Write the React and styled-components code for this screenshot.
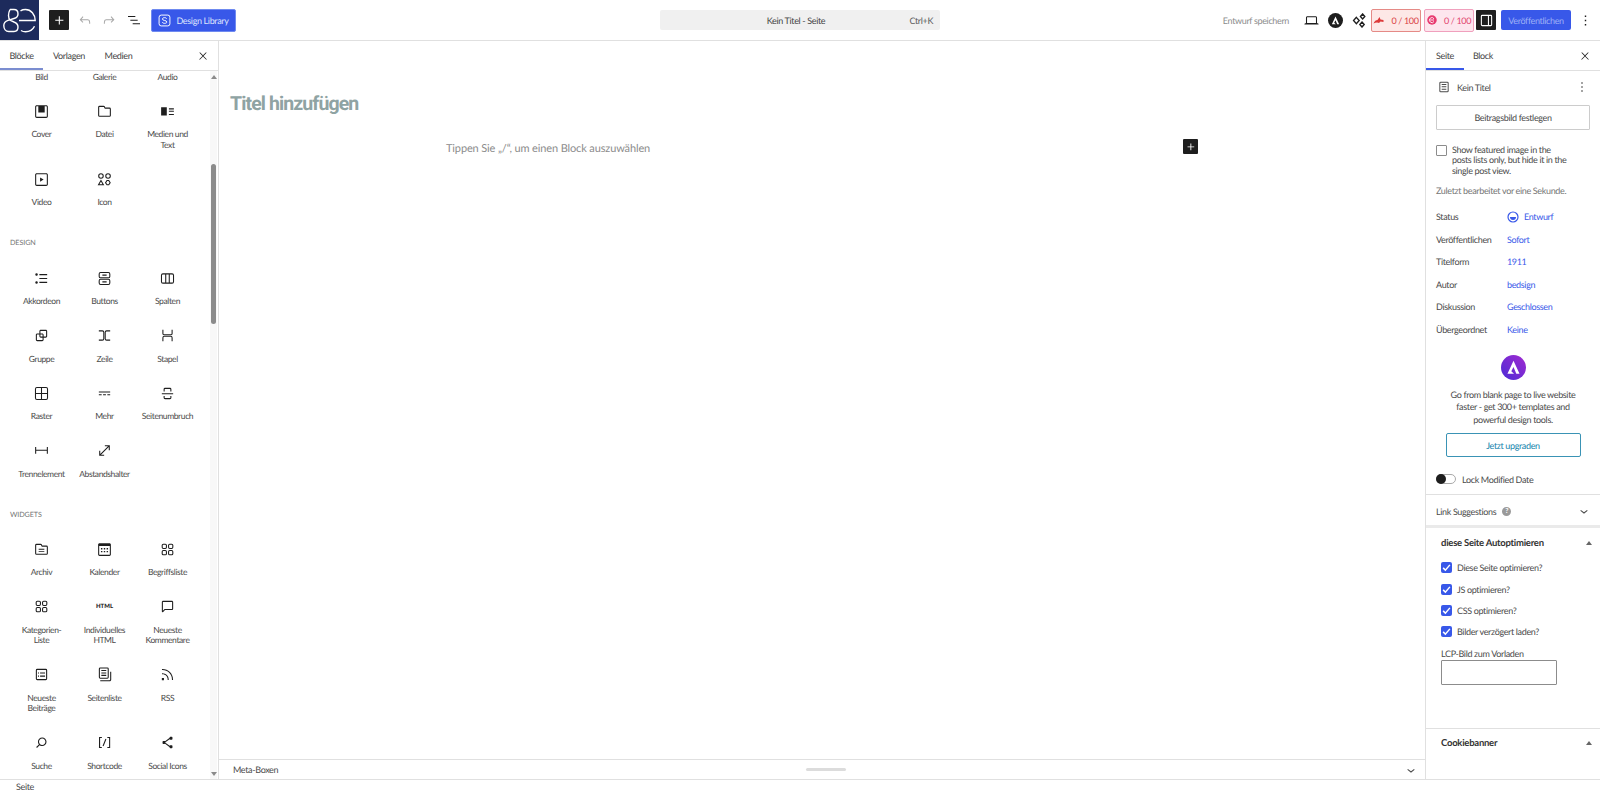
import React from "react";
import styled, { createGlobalStyle } from "styled-components";

const GlobalStyle = createGlobalStyle`
  html, body {
    margin: 0;
    padding: 0;
    height: 100%;
    background: #fff;
    overflow: hidden;
    font-family: "Lato", "Noto Sans", sans-serif;
    font-size: 9px;
    letter-spacing: -0.35px;
    color: #4a4a4a;
    text-rendering: geometricPrecision;
  }
  * { box-sizing: border-box; }
`;

const paths = {
  plus: "M11 12.5V17.5H12.5V12.5H17.5V11H12.5V6H11V11H6V12.5H11Z",
  undo: "M18.3 11.7c-.6-.6-1.4-.9-2.3-.9H6.7l2.9-3.3-1.1-1-4.5 5L8.5 16l1-1-2.7-2.7H16c.5 0 .9.2 1.3.5 1 1 1 3.4 1 4.5v.3h1.5v-.2c0-1.5 0-4.3-1.5-5.7z",
  redo: "M15.6 6.5l-1.1 1 2.9 3.3H8c-.9 0-1.7.3-2.3.9-1.4 1.5-1.4 4.2-1.4 5.6v.2h1.5v-.3c0-1.1 0-3.5 1-4.5.3-.3.7-.5 1.3-.5h9.2L14.5 15l1.1 1.1 4.6-4.6-4.6-5z",
  listView: "M3 6h11v1.5H3V6Zm3.5 5.5h11V13h-11v-1.5ZM21 17H10v1.5h11V17Z",
  close: "M13 11.8l6.1-6.3-1-1-6.1 6.2-6.1-6.2-1 1 6.1 6.3-6.5 6.7 1 1 6.5-6.6 6.5 6.6 1-1z",
  dots: "M13 19h-2v-2h2v2zm0-6h-2v-2h2v2zm0-6h-2V5h2v2z",
  laptop: "M20.5 16h-.7V8c0-1.1-.9-2-2-2H6.2c-1.1 0-2 .9-2 2v8h-.7c-.8 0-1.5.7-1.5 1.5h20c0-.8-.7-1.5-1.5-1.5zM5.7 8c0-.3.2-.5.5-.5h11.6c.3 0 .5.2.5.5v7.6H5.7V8z",
  sidebar: "M18 4H6a2 2 0 0 0-2 2v12a2 2 0 0 0 2 2h12a2 2 0 0 0 2-2V6a2 2 0 0 0-2-2ZM5.5 18V6a.5.5 0 0 1 .5-.5h8v13H6a.5.5 0 0 1-.5-.5Zm13 0a.5.5 0 0 1-.5.5h-2.500v-13H18a.5.5 0 0 1 .5.5v12Z",
  chevronDown: "M17.5 11.6L12 16l-5.5-4.4.9-1.2L12 14l4.5-3.6 1 1.2z",
  page: "M15.5 7.5h-7V9h7V7.5Zm-7 3.5h7v1.5h-7V11Zm7 3.5h-7V16h7v-1.5ZM17 4H7a2 2 0 0 0-2 2v12a2 2 0 0 0 2 2h10a2 2 0 0 0 2-2V6a2 2 0 0 0-2-2ZM7 5.5h10a.5.5 0 0 1 .5.5v12a.5.5 0 0 1-.5.5H7a.5.5 0 0 1-.5-.5V6a.5.5 0 0 1 .5-.5Z",
  cover: "M18.7 3H5.3C4 3 3 4 3 5.3v13.4C3 20 4 21 5.3 21h13.4c1.3 0 2.3-1 2.3-2.3V5.3C21 4 20 3 18.7 3zm.8 15.7c0 .4-.4.8-.8.8H5.3c-.4 0-.8-.4-.8-.8V5.3c0-.4.4-.8.8-.8h2.2v8.9h9V4.5h2.2c.4 0 .8.4.8.8v13.4z",
  file: "M12.848 8a1 1 0 0 1-.914-.594l-.723-1.63a.5.5 0 0 0-.447-.276H5a.5.5 0 0 0-.5.5v11.5a.5.5 0 0 0 .5.5h14a.5.5 0 0 0 .5-.5v-9A.5.5 0 0 0 19 8h-6.152Zm.612-1.5a.5.5 0 0 1-.462-.31l-.445-1.084A2 2 0 0 0 10.763 4H5a2 2 0 0 0-2 2v11.5a2 2 0 0 0 2 2h14a2 2 0 0 0 2-2v-9a2 2 0 0 0-2-2h-5.54Z",
  mediaText: "M3 6v11.5h8V6H3Zm11 3h7V7.5h-7V9Zm7 3.5h-7V11h7v1.5ZM14 17h7v-1.5h-7V17Z",
  video: "M18.7 3H5.3C4 3 3 4 3 5.3v13.4C3 20 4 21 5.3 21h13.4c1.3 0 2.3-1 2.3-2.3V5.3C21 4 20 3 18.7 3zm.8 15.7c0 .4-.4.8-.8.8H5.3c-.4 0-.8-.4-.8-.8V5.3c0-.4.4-.8.8-.8h13.4c.4 0 .8.4.8.8v13.4zM10 15l5-3-5-3v6z",
  group: "M18 4h-7c-1.1 0-2 .9-2 2v3H6c-1.1 0-2 .9-2 2v7c0 1.1.9 2 2 2h7c1.1 0 2-.9 2-2v-3h3c1.1 0 2-.9 2-2V6c0-1.1-.9-2-2-2zm-4.5 14c0 .3-.2.5-.5.5H6c-.3 0-.5-.2-.5-.5v-7c0-.3.2-.5.5-.5h3V13c0 1.1.9 2 2 2h2.5v3zm0-4.5H11c-.3 0-.5-.2-.5-.5v-2.5H13c.3 0 .5.2.5.5v2.5zm5-.5c0 .3-.2.5-.5.5h-3V11c0-1.1-.9-2-2-2h-2.5V6c0-.3.2-.5.5-.5h7c.3 0 .5.2.5.5v7z",
  more: "M4 9v1.5h16V9H4zm12 5.5h4V13h-4v1.5zm-6 0h4V13h-4v1.5zm-6 0h4V13H4v1.5z",
  pageBreak: "M17.5 9V6a2 2 0 0 0-2-2h-7a2 2 0 0 0-2 2v3H8V6a.5.5 0 0 1 .5-.5h7a.5.5 0 0 1 .5.5v3h1.5Zm0 6.5V18a2 2 0 0 1-2 2h-7a2 2 0 0 1-2-2v-2.5H8V18a.5.5 0 0 0 .5.5h7a.5.5 0 0 0 .5-.5v-2.5h1.5ZM4 13h16v-1.5H4V13Z",
  separator: "M4.5 12.5v4H3V7h1.5v3.987h15V7H21v9.5h-1.5v-4h-15Z",
  spacer: "M12.5 4.5h7v7h-1.5V7.06L7.06 18H11.5v1.5h-7v-7H6v4.44L16.94 6H12.5z",
  calendar: "M19 3H5c-1.1 0-2 .9-2 2v14c0 1.1.9 2 2 2h14c1.1 0 2-.9 2-2V5c0-1.1-.9-2-2-2zm.5 16c0 .3-.2.5-.5.5H5c-.3 0-.5-.2-.5-.5V7h15v12zM9 10H7v2h2v-2zm0 4H7v2h2v-2zm4-4h-2v2h2v-2zm4 0h-2v2h2v-2zm-4 4h-2v2h2v-2zm4 0h-2v2h2v-2z",
  comment: "M18 4H6c-1.1 0-2 .9-2 2v12.9c0 .6.5 1.1 1.1 1.1.3 0 .5-.1.8-.3L8.5 17H18c1.1 0 2-.9 2-2V6c0-1.1-.9-2-2-2zm.5 11c0 .3-.2.5-.5.5H7.9l-2.4 2.4V6c0-.3.2-.5.5-.5h12c.3 0 .5.2.5.5v9z",
  postList: "M18 5.5H6a.5.5 0 0 0-.5.5v12a.5.5 0 0 0 .5.5h12a.5.5 0 0 0 .5-.5V6a.5.5 0 0 0-.5-.5ZM6 4h12a2 2 0 0 1 2 2v12a2 2 0 0 1-2 2H6a2 2 0 0 1-2-2V6a2 2 0 0 1 2-2Zm1 5h1.5v1.5H7V9Zm1.5 4.5H7V15h1.5v-1.5ZM10 9h7v1.5h-7V9Zm7 4.5h-7V15h7v-1.5Z",
  pages: "M14.5 5.5h-7V7h7V5.5ZM7.5 9h7v1.5h-7V9Zm7 3.5h-7V14h7v-1.5ZM16 2H6a2 2 0 0 0-2 2v12a2 2 0 0 0 2 2h10a2 2 0 0 0 2-2V4a2 2 0 0 0-2-2ZM6 3.5h10a.5.5 0 0 1 .5.5v12a.5.5 0 0 1-.5.5H6a.5.5 0 0 1-.5-.5V4a.5.5 0 0 1 .5-.5ZM20 8v11c0 .69-.31 1-.999 1H6v1.5h13.001c1.52 0 2.499-.982 2.499-2.5V8H20Z",
  rss: "M5 10.2h-.8v1.5H5c1.9 0 3.8.8 5.1 2.1 1.4 1.4 2.1 3.2 2.1 5.1v.8h1.5V19c0-2.3-.9-4.5-2.6-6.2-1.6-1.6-3.8-2.6-6.1-2.6zm10.4-1.6C12.6 5.8 8.9 4.2 5 4.2h-.8v1.5H5c3.5 0 6.9 1.4 9.4 3.9s3.9 5.8 3.9 9.4v.8h1.5V19c0-3.9-1.6-7.6-4.4-10.4zM4 20h3v-3H4v3z",
  search: "M13 5c-3.3 0-6 2.7-6 6 0 1.4.5 2.7 1.3 3.7l-3.8 3.8 1.1 1.1 3.8-3.8c1 .8 2.3 1.3 3.7 1.3 3.3 0 6-2.7 6-6S16.3 5 13 5zm0 10.5c-2.5 0-4.5-2-4.5-4.5s2-4.5 4.5-4.5 4.5 2 4.5 4.5-2 4.5-4.5 4.5z",
  shortcode: "M16 4.2v1.5h2.5v12.5H16v1.5h4V4.2h-4zM4.2 19.8h4v-1.5H5.8V5.8h2.5V4.2h-4l-.1 15.6zm5.1-3.1l1.4.6 4-10-1.4-.6-4 10z",
  share: "M9 11.8l6.1-4.5c.1.4.4.7.9.7h2c.6 0 1-.4 1-1V5c0-.6-.4-1-1-1h-2c-.6 0-1 .4-1 1v.4l-6.4 4.8c-.2-.1-.4-.2-.6-.2H6c-.6 0-1 .4-1 1v2c0 .6.4 1 1 1h2c.2 0 .4-.1.6-.2l6.4 4.8v.4c0 .6.4 1 1 1h2c.6 0 1-.4 1-1v-2c0-.6-.4-1-1-1h-2c-.5 0-.8.3-.9.7L9 12.2v-.4z",
  archive: "M12.848 8a1 1 0 0 1-.914-.594l-.723-1.63a.5.5 0 0 0-.447-.276H5a.5.5 0 0 0-.5.5v11.5a.5.5 0 0 0 .5.5h14a.5.5 0 0 0 .5-.5v-9A.5.5 0 0 0 19 8h-6.152Zm.612-1.5a.5.5 0 0 1-.462-.31l-.445-1.084A2 2 0 0 0 10.763 4H5a2 2 0 0 0-2 2v11.5a2 2 0 0 0 2 2h14a2 2 0 0 0 2-2v-9a2 2 0 0 0-2-2h-5.54ZM8 11h8v1.3H8V11Zm0 3h8v1.3H8V14Z",
};

// icons that are easier with strokes than with one filled path
const strokes = {
  shapes: (
    <>
      <circle cx="7" cy="7" r="3.2" />
      <circle cx="17" cy="7" r="3.2" />
      <path d="M7 13.5l3.4 6H3.6z" />
      <path d="M15.5 13.5h2.5l2 3-2 3h-2.5l-2-3z" />
    </>
  ),
  accordion: (
    <>
      <path d="M9 6.500h11M9 12h11M9 17.500h11" />
      <circle cx="5" cy="6.500" r="1" fill="currentColor" />
      <circle cx="5" cy="17.500" r="1" fill="currentColor" />
    </>
  ),
  buttons: (
    <>
      <rect x="4.5" y="3.5" width="15" height="7.5" rx="2" />
      <rect x="4.5" y="13" width="15" height="7.5" rx="2" />
      <path d="M9 7.2h6M9 16.8h6" />
    </>
  ),
  columns: (
    <>
      <rect x="3.5" y="5.5" width="17" height="13" rx="2" />
      <path d="M9.5 5.5v13M14.5 5.5v13" />
    </>
  ),
  row: (
    <>
      <path d="M4 5.5h5a2 2 0 0 1 2 2v9a2 2 0 0 1-2 2H4" />
      <path d="M20 5.5h-5a2 2 0 0 0-2 2v9a2 2 0 0 0 2 2h5" />
    </>
  ),
  stack: (
    <>
      <path d="M5.500 4v5a2 2 0 0 0 2 2h9a2 2 0 0 0 2-2V4" />
      <path d="M5.500 20v-5a2 2 0 0 1 2-2h9a2 2 0 0 1 2 2v5" />
    </>
  ),
  grid: (
    <>
      <rect x="3.5" y="3.5" width="17" height="17" rx="2" />
      <path d="M12 3.5v17M3.5 12h17" />
    </>
  ),
  category: (
    <>
      <rect x="4.5" y="4.5" width="6" height="6" rx="1.6" />
      <rect x="13.5" y="4.5" width="6" height="6" rx="1.6" />
      <rect x="4.5" y="13.5" width="6" height="6" rx="1.6" />
      <rect x="13.5" y="13.5" width="6" height="6" rx="1.6" />
    </>
  ),
};

const Icon = ({ name, size = 17 }) => (
  <Svg viewBox="0 0 24 24" $size={size} aria-hidden="true">
    {strokes[name] ? (
      <g fill="none" stroke="currentColor" strokeWidth="1.5">
        {strokes[name]}
      </g>
    ) : (
      <path d={paths[name]} fill="currentColor" fillRule="evenodd" />
    )}
  </Svg>
);

const AstraMark = ({ size, bg }) => (
  <svg width={size} height={size} viewBox="0 0 24 24" aria-hidden="true">
    {bg === "gradient" && (
      <defs>
        <linearGradient id="astraGrad" x1="0" y1="1" x2="1" y2="0">
          <stop offset="0" stopColor="#4a2bd6" />
          <stop offset="1" stopColor="#a32ad0" />
        </linearGradient>
      </defs>
    )}
    <circle cx="12" cy="12" r="12" fill={bg === "gradient" ? "url(#astraGrad)" : bg} />
    <path d="M12 5.500l5.800 12.500h-3.100L12 11.600 9.900 15.600l2.600 2.400H6.200z" fill="#fff" />
  </svg>
);

const blocksTop = [
  { icon: "cover", label: "Cover" },
  { icon: "file", label: "Datei" },
  { icon: "mediaText", label: ["Medien und", "Text"] },
  { icon: "video", label: "Video" },
  { icon: "shapes", label: "Icon" },
];

const blocksDesign = [
  { icon: "accordion", label: "Akkordeon" },
  { icon: "buttons", label: "Buttons" },
  { icon: "columns", label: "Spalten" },
  { icon: "group", label: "Gruppe" },
  { icon: "row", label: "Zeile" },
  { icon: "stack", label: "Stapel" },
  { icon: "grid", label: "Raster" },
  { icon: "more", label: "Mehr" },
  { icon: "pageBreak", label: "Seitenumbruch" },
  { icon: "separator", label: "Trennelement" },
  { icon: "spacer", label: "Abstandshalter" },
];

const blocksWidgets = [
  { icon: "archive", label: "Archiv" },
  { icon: "calendar", label: "Kalender" },
  { icon: "category", label: "Begriffsliste" },
  { icon: "category", label: ["Kategorien-", "Liste"] },
  { html: true, label: ["Individuelles", "HTML"] },
  { icon: "comment", label: ["Neueste", "Kommentare"] },
  { icon: "postList", label: ["Neueste", "Beiträge"] },
  { icon: "pages", label: "Seitenliste" },
  { icon: "rss", label: "RSS" },
  { icon: "search", label: "Suche" },
  { icon: "shortcode", label: "Shortcode" },
  { icon: "share", label: "Social Icons" },
];

const summary = [
  ["Veröffentlichen", "Sofort"],
  ["Titelform", "1911"],
  ["Autor", "bedsign"],
  ["Diskussion", "Geschlossen"],
  ["Übergeordnet", "Keine"],
];

const optimize = [
  "Diese Seite optimieren?",
  "JS optimieren?",
  "CSS optimieren?",
  "Bilder verzögert laden?",
];

const BlockGrid = ({ items }) => (
  <Grid>
    {items.map((item, i) => (
      <Cell key={i}>
        <CellIcon>
          {item.html ? <HtmlTag>HTML</HtmlTag> : <Icon name={item.icon} />}
        </CellIcon>
        <CellLabel>
          {[].concat(item.label).map((line) => (
            <div key={line}>{line}</div>
          ))}
        </CellLabel>
      </Cell>
    ))}
  </Grid>
);

const App = () => {
  return (
    <Page>
      <GlobalStyle />
      <TopBar>
        <TopLeft>
          <Logo>
            <svg width="39" height="40" viewBox="0 0 39 40" fill="none" stroke="#fff" strokeWidth="1.400">
              <path d="M10 9.500h4c2.500 0 4 1.800 4 4.400 0 2.300-1.500 3.800-4 4.600L8 20.300c-2.700.9-4.200 2.700-4.200 5.200 0 3.500 2 6 5 6H14c2.500 0 4-2 4-4.500s-1.500-4-4-5l-3.500-1.500C9 19.500 8.500 17.500 8.500 15.500c0-2 .5-4 1.500-6" />
              <path d="M19 20.500h16.200c0-6-4.200-11-9.700-11-2 0-3.500.4-5 1.300" />
              <path d="M21 30.500c1.400.9 3 1.300 4.500 1.300 4 0 7.300-2 9-5.500" />
            </svg>
          </Logo>
          <InserterButton>
            <Icon name="plus" size={17} />
          </InserterButton>
          <GhostIcon $muted $left={8}>
            <Icon name="undo" size={16} />
          </GhostIcon>
          <GhostIcon $muted $left={8}>
            <Icon name="redo" size={16} />
          </GhostIcon>
          <GhostIcon $left={9}>
            <Icon name="listView" size={16} />
          </GhostIcon>
          <LibraryButton>
            <svg width="13" height="13" viewBox="0 0 24 24" fill="none" stroke="#fff" strokeWidth="1.800">
              <rect x="2" y="2" width="20" height="20" rx="4" />
              <path d="M16 8.500c-.8-1.200-2.300-1.800-4-1.800-2.200 0-3.800 1-3.800 2.600 0 3.700 8 1.700 8 5.400 0 1.700-1.700 2.600-4 2.600-1.900 0-3.500-.7-4.300-2" />
            </svg>
            Design Library
          </LibraryButton>
        </TopLeft>
        <CommandBar>
          <CommandTitle>Kein Titel - Seite</CommandTitle>
          <Shortcut>Ctrl+K</Shortcut>
        </CommandBar>
        <TopRight>
          <SaveDraft>Entwurf speichern</SaveDraft>
          <GhostIcon $left={13.5}>
            <Icon name="laptop" size={17} />
          </GhostIcon>
          <AstraSlot>
            <AstraMark size={15} bg="#1e1e1e" />
          </AstraSlot>
          <SparkleSlot>
            <svg width="15" height="15" viewBox="0 0 24 24" fill="none" stroke="#1e1e1e" strokeWidth="2.200">
              <path d="M7 7l4.500 5L7 17l-4.500-5z" />
              <path d="M17 1.500l3.500 4-3.500 4-3.500-4z" />
              <path d="M16 14.500l3.500 4-3.500 4-3.500-4z" />
            </svg>
          </SparkleSlot>
          <ScorePill $tone="red">
            <svg width="11" height="9" viewBox="0 0 22 18" fill="#dd3a3a">
              <path d="M1 15c2-5 5-7 8-7l4-6 2 5 6 1v4l-6-1-3 3c-3-2-7-1-11 1z" />
            </svg>
            0 / 100
          </ScorePill>
          <ScorePill $tone="pink">
            <svg width="10" height="10" viewBox="0 0 20 20">
              <circle cx="10" cy="10" r="9.500" fill="#e8396f" />
              <path d="M14 7.500A5 5 0 1 0 14 13M6 10h8" fill="none" stroke="#fde6ee" strokeWidth="2" />
            </svg>
            0 / 100
          </ScorePill>
          <SidebarToggle>
            <Icon name="sidebar" size={17} />
          </SidebarToggle>
          <PublishButton>Veröffentlichen</PublishButton>
          <GhostIcon $left={5.5}>
            <Icon name="dots" size={17} />
          </GhostIcon>
        </TopRight>
      </TopBar>

      <Main>
        <Inserter>
          <TabRow>
            <Tab $active $width={43}>Blöcke</Tab>
            <Tab $width={52}>Vorlagen</Tab>
            <Tab $width={47}>Medien</Tab>
            <TabClose $right={9}>
              <Icon name="close" size={12} />
            </TabClose>
          </TabRow>
          <InserterBody>
            <BlockList>
              <ClippedLabels>
                <span>Bild</span>
                <span>Galerie</span>
                <span>Audio</span>
              </ClippedLabels>
              <BlockGrid items={blocksTop} />
              <SectionTitle $top={9.5} $bottom={22}>DESIGN</SectionTitle>
              <BlockGrid items={blocksDesign} />
              <SectionTitle $top={10.5} $bottom={20.5}>WIDGETS</SectionTitle>
              <BlockGrid items={blocksWidgets} />
            </BlockList>
            <Scrollbar>
              <ArrowUp />
              <Thumb />
              <ArrowDown />
            </Scrollbar>
          </InserterBody>
        </Inserter>

        <Editor>
          <Canvas>
            <PostTitle>Titel hinzufügen</PostTitle>
            <BlockRow>
              <Placeholder>Tippen Sie „/“, um einen Block auszuwählen</Placeholder>
              <AddBlock>
                <Icon name="plus" size={14} />
              </AddBlock>
            </BlockRow>
          </Canvas>
          <MetaBar>
            <span>Meta-Boxen</span>
            <ResizeHandle />
            <MetaChevron>
              <Icon name="chevronDown" size={16} />
            </MetaChevron>
          </MetaBar>
        </Editor>

        <Sidebar>
          <TabRow>
            <Tab $active $blue $width={38}>Seite</Tab>
            <Tab $width={38}>Block</Tab>
            <TabClose $right={9}>
              <Icon name="close" size={12} />
            </TabClose>
          </TabRow>
          <SidebarBody>
            <PostPanel>
              <PostHead>
                <Icon name="page" size={16} />
                <PostName>Kein Titel</PostName>
                <Icon name="dots" size={16} />
              </PostHead>
              <FeaturedButton>Beitragsbild festlegen</FeaturedButton>
              <ShowFeatured>
                <EmptyBox />
                <div>
                  Show featured image in the
                  <br />
                  posts lists only, but hide it in the
                  <br />
                  single post view.
                </div>
              </ShowFeatured>
              <LastEdit>Zuletzt bearbeitet vor eine Sekunde.</LastEdit>
              <SummaryList>
                <SummaryRow>
                  <SummaryLabel>Status</SummaryLabel>
                  <StatusValue>
                    <svg width="12" height="12" viewBox="0 0 12 12">
                      <circle cx="6" cy="6" r="5" fill="none" stroke="#3858e9" strokeWidth="1.200" />
                      <path d="M3 6h6a3 3 0 0 1-6 0z" fill="#3858e9" />
                    </svg>
                    <SummaryLink>Entwurf</SummaryLink>
                  </StatusValue>
                </SummaryRow>
                {summary.map(([label, value]) => (
                  <SummaryRow key={label}>
                    <SummaryLabel>{label}</SummaryLabel>
                    <SummaryLink>{value}</SummaryLink>
                  </SummaryRow>
                ))}
              </SummaryList>
              <Upsell>
                <AstraMark size={25} bg="gradient" />
                <UpsellText>
                  Go from blank page to live website
                  <br />
                  faster - get 300+ templates and
                  <br />
                  powerful design tools.
                </UpsellText>
                <UpgradeButton>Jetzt upgraden</UpgradeButton>
              </Upsell>
              <LockRow>
                <Toggle>
                  <Knob />
                </Toggle>
                Lock Modified Date
              </LockRow>
            </PostPanel>
            <LinkPanel>
              <span>Link Suggestions</span>
              <HelpDot>?</HelpDot>
              <PanelChevron>
                <Icon name="chevronDown" size={16} />
              </PanelChevron>
            </LinkPanel>
            <MetaPanel>
              <MetaHead>
                diese Seite Autoptimieren
                <SmallArrow />
              </MetaHead>
              {optimize.map((text) => (
                <CheckRow key={text}>
                  <CheckedBox>
                    <svg width="9" height="9" viewBox="0 0 12 12" fill="none" stroke="#fff" strokeWidth="2">
                      <path d="M1.500 6.500l3 3 6-7" />
                    </svg>
                  </CheckedBox>
                  {text}
                </CheckRow>
              ))}
              <LcpLabel>LCP-Bild zum Vorladen</LcpLabel>
              <LcpInput />
            </MetaPanel>
            <CookiePanel>
              <MetaHead>
                Cookiebanner
                <SmallArrow />
              </MetaHead>
            </CookiePanel>
          </SidebarBody>
        </Sidebar>
      </Main>

      <Footer>Seite</Footer>
    </Page>
  );
};

const Svg = styled.svg`
  display: block;
  flex: none;
  width: ${(p) => p.$size}px;
  height: ${(p) => p.$size}px;
`;

const Page = styled.div`
  width: 1600px;
  height: 790px;
  display: flex;
  flex-direction: column;
  overflow: hidden;
`;

// Top bar
const TopBar = styled.header`
  height: 41px;
  flex: none;
  display: grid;
  grid-template-columns: minmax(0, 1fr) 280px minmax(0, 1fr);
  align-items: center;
  border-bottom: 1px solid #e0e0e0;
`;
const TopLeft = styled.div`
  display: flex;
  align-items: center;
  height: 40px;
`;
const Logo = styled.div`
  width: 39px;
  height: 40px;
  background: #1d2b5c;
  display: flex;
`;
const InserterButton = styled.div`
  width: 20px;
  height: 20px;
  margin-left: 10px;
  background: #1e1e1e;
  color: #fff;
  border-radius: 1px;
  display: flex;
  align-items: center;
  justify-content: center;
`;
const GhostIcon = styled.div`
  margin-left: ${(p) => p.$left}px;
  color: ${(p) => (p.$muted ? "#a8a8a8" : "#1e1e1e")};
`;
const LibraryButton = styled.div`
  height: 23px;
  width: 85px;
  margin-left: 9px;
  display: flex;
  align-items: center;
  justify-content: center;
  gap: 5px;
  background: #3858e9;
  border: 1px solid #6f8af0;
  border-radius: 2px;
  color: #dfe5fd;
`;
const CommandBar = styled.div`
  height: 20px;
  background: #f0f0f0;
  border-radius: 2px;
  display: flex;
  align-items: center;
  position: relative;
  padding: 0 7px;
  justify-content: flex-end;
`;
const CommandTitle = styled.div`
  position: absolute;
  left: 0;
  right: 8px;
  text-align: center;
  color: #444;
`;
const Shortcut = styled.div`
  color: #5a5a5a;
`;
const TopRight = styled.div`
  display: flex;
  align-items: center;
  justify-content: flex-end;
  height: 40px;
  padding-right: 6.5px;
`;
const SaveDraft = styled.div`
  color: #8c8c8c;
`;
const AstraSlot = styled.div`
  margin-left: 8px;
  display: flex;
`;
const SparkleSlot = styled.div`
  margin-left: 9px;
  display: flex;
`;
const ScorePill = styled.div`
  height: 23px;
  width: 50px;
  margin-left: ${(p) => (p.$tone === "red" ? 4.5 : 3)}px;
  border-radius: 2px;
  display: flex;
  align-items: center;
  justify-content: center;
  gap: 7px;
  white-space: nowrap;
  color: ${(p) => (p.$tone === "red" ? "#d94141" : "#e2446f")};
  background: ${(p) => (p.$tone === "red" ? "#fde8e6" : "#fde6ee")};
  border: 1px solid ${(p) => (p.$tone === "red" ? "#e58a86" : "#f0a0bd")};
`;
const SidebarToggle = styled.div`
  width: 20px;
  height: 20px;
  margin-left: 2px;
  background: #1e1e1e;
  color: #fff;
  border-radius: 1px;
  display: flex;
  align-items: center;
  justify-content: center;
`;
const PublishButton = styled.div`
  width: 70px;
  height: 20px;
  margin-left: 5px;
  background: #3858e9;
  color: #9db0f6;
  border-radius: 2px;
  display: flex;
  align-items: center;
  justify-content: center;
`;

// Main
const Main = styled.div`
  flex: 1;
  display: flex;
  min-height: 0;
`;

// Tabs (shared by the two side panels)
const TabRow = styled.div`
  height: 30px;
  flex: none;
  display: flex;
  border-bottom: 1px solid #e0e0e0;
`;
const Tab = styled.div`
  width: ${(p) => p.$width}px;
  display: flex;
  align-items: center;
  justify-content: center;
  color: #444;
  box-shadow: ${(p) =>
    p.$active ? `inset 0 -2px 0 ${p.$blue ? "#3858e9" : "#7b8dd0"}` : "none"};
`;
const TabClose = styled.div`
  margin-left: auto;
  margin-right: ${(p) => p.$right}px;
  align-self: center;
  color: #1e1e1e;
`;

// Left panel
const Inserter = styled.aside`
  width: 219px;
  flex: none;
  display: flex;
  flex-direction: column;
  border-right: 1px solid #e0e0e0;
`;
const InserterBody = styled.div`
  flex: 1;
  min-height: 0;
  display: flex;
`;
const BlockList = styled.div`
  flex: 1;
  min-width: 0;
  overflow: hidden;
  padding: 1px 0 0 10px;
`;
const ClippedLabels = styled.div`
  display: grid;
  grid-template-columns: repeat(3, 63px);
  font-size: 8.5px;
  letter-spacing: -0.4px;
  line-height: 10px;
  height: 10px;
  margin-bottom: 20.5px;
  text-align: center;
`;
const Grid = styled.div`
  display: grid;
  grid-template-columns: repeat(3, 63px);
`;
const Cell = styled.div`
  display: flex;
  flex-direction: column;
  align-items: center;
  padding-bottom: 20.5px;
`;
const CellIcon = styled.div`
  height: 17px;
  display: flex;
  align-items: center;
  color: #1e1e1e;
`;
const CellLabel = styled.div`
  margin-top: 9.5px;
  font-size: 8.5px;
  letter-spacing: -0.4px;
  text-align: center;
  line-height: 10.5px;
  white-space: nowrap;
`;
const HtmlTag = styled.span`
  font-size: 6px;
  font-weight: 900;
  letter-spacing: 0;
  color: #1e1e1e;
`;
const SectionTitle = styled.div`
  font-size: 7.2px;
  letter-spacing: -0.1px;
  color: #757575;
  height: 10px;
  line-height: 10px;
  margin: ${(p) => p.$top}px 0 ${(p) => p.$bottom}px;
`;
const Scrollbar = styled.div`
  width: 7px;
  flex: none;
  margin-right: 1px;
  background: #f8f8f8;
  display: flex;
  flex-direction: column;
  align-items: center;
  padding-top: 4px;
`;
const ArrowUp = styled.div`
  border: 3px solid transparent;
  border-top: 0;
  border-bottom: 4px solid #8a8a8a;
`;
const Thumb = styled.div`
  width: 5px;
  height: 160px;
  margin-top: 85px;
  background: #8b8b8b;
  border-radius: 3px;
`;
const ArrowDown = styled.div`
  margin-top: auto;
  margin-bottom: 3px;
  border: 3px solid transparent;
  border-bottom: 0;
  border-top: 4px solid #8a8a8a;
`;

// Editor
const Editor = styled.main`
  flex: 1;
  min-width: 0;
  display: flex;
  flex-direction: column;
`;
const Canvas = styled.div`
  flex: 1;
  min-height: 0;
`;
const PostTitle = styled.h1`
  margin: 50px 0 0 11px;
  font-family: "Roboto", sans-serif;
  font-size: 19.5px;
  line-height: 26px;
  font-weight: 700;
  letter-spacing: -0.9px;
  color: #8fa3a3;
`;
const BlockRow = styled.div`
  width: 752px;
  margin: 25px auto 0;
  display: flex;
  align-items: center;
  justify-content: space-between;
`;
const Placeholder = styled.div`
  font-size: 11px;
  letter-spacing: -0.13px;
  color: #8c8c8c;
`;
const AddBlock = styled.div`
  width: 15px;
  height: 15px;
  margin-top: -4px;
  background: #1e1e1e;
  color: #fff;
  border-radius: 1px;
  display: flex;
  align-items: center;
  justify-content: center;
`;
const MetaBar = styled.div`
  height: 20px;
  flex: none;
  border-top: 1px solid #e0e0e0;
  padding: 0 6px 0 14px;
  display: grid;
  grid-template-columns: 1fr 40px 1fr;
  align-items: center;
`;
const ResizeHandle = styled.div`
  height: 3px;
  border-radius: 2px;
  background: #dcdcdc;
`;
const MetaChevron = styled.div`
  justify-self: end;
`;

// Right panel
const Sidebar = styled.aside`
  width: 175px;
  flex: none;
  display: flex;
  flex-direction: column;
  border-left: 1px solid #e0e0e0;
`;
const SidebarBody = styled.div`
  flex: 1;
  min-height: 0;
  overflow: hidden;
`;
const PostPanel = styled.section`
  padding: 8px 10px 0;
  height: 424px;
  border-bottom: 1px solid #e0e0e0;
`;
const PostHead = styled.div`
  display: flex;
  align-items: center;
  height: 16px;
`;
const PostName = styled.div`
  margin-left: 5px;
  flex: 1;
`;
const FeaturedButton = styled.div`
  height: 25px;
  margin-top: 10px;
  border: 1px solid #ccc;
  border-radius: 1px;
  display: flex;
  align-items: center;
  justify-content: center;
`;
const ShowFeatured = styled.div`
  display: flex;
  gap: 5px;
  margin-top: 15px;
  line-height: 10.3px;
`;
const EmptyBox = styled.div`
  width: 11px;
  height: 11px;
  flex: none;
  border: 1px solid #8c8c8c;
  border-radius: 1px;
`;
const LastEdit = styled.div`
  margin-top: 9px;
  color: #757575;
  line-height: 12px;
`;
const SummaryList = styled.div`
  margin-top: 8.5px;
`;
const SummaryRow = styled.div`
  height: 22.5px;
  display: flex;
  align-items: center;
`;
const SummaryLabel = styled.div`
  width: 71px;
`;
const SummaryLink = styled.div`
  color: #3858e9;
`;
const StatusValue = styled.div`
  display: flex;
  align-items: center;
  gap: 5px;
`;
const Upsell = styled.div`
  margin-top: 14.5px;
  display: flex;
  flex-direction: column;
  align-items: center;
`;
const UpsellText = styled.div`
  margin-top: 9px;
  text-align: center;
  line-height: 12.6px;
`;
const UpgradeButton = styled.div`
  width: 135px;
  height: 24px;
  margin-top: 6.5px;
  border: 1px solid #3a93b5;
  border-radius: 2px;
  color: #1383ac;
  display: flex;
  align-items: center;
  justify-content: center;
`;
const LockRow = styled.div`
  margin-top: 17px;
  height: 10px;
  display: flex;
  align-items: center;
  gap: 6px;
`;
const Toggle = styled.div`
  width: 20px;
  height: 10px;
  border: 1px solid #aaa;
  border-radius: 5px;
  position: relative;
`;
const Knob = styled.div`
  position: absolute;
  left: -1px;
  top: -1px;
  width: 10px;
  height: 10px;
  border-radius: 50%;
  background: #1e1e1e;
`;
const LinkPanel = styled.section`
  height: 33px;
  padding: 2px 8px 0 10px;
  display: flex;
  align-items: center;
  border-bottom: 3px solid #eaeaea;
`;
const HelpDot = styled.div`
  width: 9px;
  height: 9px;
  margin-left: 6px;
  border-radius: 50%;
  background: #9a9a9a;
  color: #fff;
  font-size: 7px;
  font-weight: 700;
  line-height: 9px;
  text-align: center;
`;
const PanelChevron = styled.div`
  margin-left: auto;
`;
const MetaPanel = styled.section`
  height: 201px;
  padding: 8px 10px 0 15px;
  border-bottom: 1px solid #e0e0e0;
`;
const MetaHead = styled.div`
  display: flex;
  align-items: center;
  justify-content: space-between;
  font-size: 9.5px;
  letter-spacing: -0.25px;
  font-weight: 700;
  height: 14px;
  margin-bottom: 7px;
  color: #333;
`;
const SmallArrow = styled.div`
  border: 3px solid transparent;
  border-top: 0;
  border-bottom: 4px solid #666;
  margin-right: -2px;
`;
const CheckRow = styled.div`
  display: flex;
  align-items: center;
  gap: 5px;
  height: 21.4px;
`;
const CheckedBox = styled.div`
  width: 11px;
  height: 11px;
  background: #3858e9;
  border-radius: 2px;
  display: flex;
  align-items: center;
  justify-content: center;
`;
const LcpLabel = styled.div`
  margin-top: 5.4px;
  line-height: 12px;
`;
const LcpInput = styled.div`
  width: 116px;
  height: 25px;
  border: 1px solid #8c8c8c;
  border-radius: 1px;
`;
const CookiePanel = styled.section`
  padding: 7px 10px 0 15px;
`;

// Footer
const Footer = styled.footer`
  height: 11px;
  flex: none;
  border-top: 1px solid #e0e0e0;
  padding-left: 16px;
  line-height: 14px;
  overflow: hidden;
`;

export default App;
